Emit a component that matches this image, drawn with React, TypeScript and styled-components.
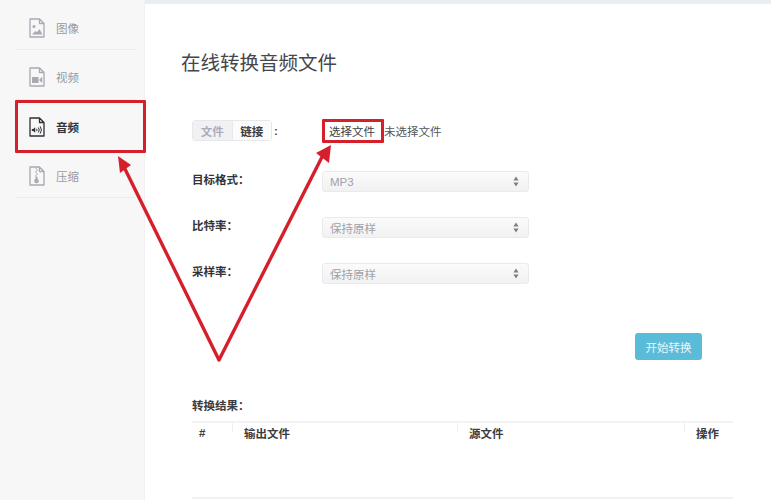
import React from "react";
import styled, { createGlobalStyle } from "styled-components";

const FONT = `"Liberation Sans", "Noto Sans CJK SC", sans-serif`;

const GlobalStyle = createGlobalStyle`
  html, body {
    margin: 0;
    padding: 0;
    background: #fff;
    font-family: ${FONT};
  }
`;

const Page = styled.div`
  width: 771px;
  height: 500px;
  position: relative;
  overflow: hidden;
  display: flex;
`;

const Sidebar = styled.aside`
  width: 145px;
  height: 100%;
  flex-shrink: 0;
  background: #f7f7f8;
  border-right: 1px solid #f1f1f3;
  box-sizing: border-box;
`;

const NavList = styled.nav`
  display: flex;
  flex-direction: column;
  padding: 1px 9px 0 16px;
`;

const NavItem = styled.div<{ $active?: boolean }>`
  height: 49.3px;
  box-sizing: border-box;
  padding: 6px 0 0 13px;
  display: flex;
  align-items: center;
  gap: 11px;
  border-bottom: 1px solid ${(p) => (p.$active ? "transparent" : "#ebebed")};
  color: ${(p) => (p.$active ? "#33343a" : "#989aa3")};
  font-size: 11.5px;
  font-weight: ${(p) => (p.$active ? 700 : 400)};
`;

const Main = styled.main`
  flex: 1;
  display: flex;
  flex-direction: column;
  min-width: 0;
`;

const TopStrip = styled.div`
  height: 4px;
  background: #e9eef3;
`;

const Content = styled.div`
  padding: 46px 38px 0 36px;
`;

const Title = styled.h1`
  margin: 0;
  font-size: 19.5px;
  line-height: 26px;
  font-weight: 400;
  color: #45464b;
`;

const Form = styled.div`
  margin: 44px 0 0 11px;
  display: flex;
  flex-direction: column;
`;

const Row = styled.div<{ $top?: number }>`
  display: flex;
  align-items: center;
  height: 21px;
  margin-top: ${(p) => p.$top ?? 0}px;
`;

const Label = styled.div`
  width: 130px;
  font-size: 11.5px;
  font-weight: 700;
  color: #33343a;
  position: relative;
  top: -3px;
`;

const TabsCell = styled.div`
  width: 130px;
  display: flex;
  align-items: center;
  gap: 2px;
  font-size: 11.5px;
  font-weight: 700;
  color: #44454a;
`;

const Tabs = styled.div`
  display: flex;
  width: 80px;
  height: 21px;
  border: 1px solid #e8e8ea;
  border-radius: 3px;
  box-sizing: border-box;
`;

const Tab = styled.div<{ $active?: boolean }>`
  flex: 1;
  display: flex;
  align-items: center;
  justify-content: center;
  font-size: 11.5px;
  font-weight: 700;
  color: ${(p) => (p.$active ? "#a9acb8" : "#3b3c42")};
  background: ${(p) => (p.$active ? "#f1f1f4" : "#fbfbfb")};
  & + & {
    border-left: 1px solid #e8e8ea;
  }
`;

const FileButton = styled.div`
  width: 60px;
  margin-right: 2px;
  text-align: center;
  font-size: 11.5px;
  color: #3b3c42;
`;

const FileStatus = styled.span`
  font-size: 11.5px;
  color: #55565b;
`;

const SelectBox = styled.div`
  width: 207px;
  height: 21px;
  box-sizing: border-box;
  padding: 0 9px 0 7px;
  display: flex;
  align-items: center;
  justify-content: space-between;
  border: 1px solid #eaeaec;
  border-radius: 3px;
  background: linear-gradient(#fbfbfb, #f1f1f2);
  font-size: 11.5px;
  color: #9fa1a8;
`;

const Actions = styled.div`
  display: flex;
  justify-content: flex-end;
  margin-top: 49px;
  padding-right: 31px;
`;

const StartButton = styled.div`
  width: 67px;
  height: 27px;
  border-radius: 3px;
  background: #5bbcd9;
  color: #e9f7fb;
  font-size: 11.5px;
  display: flex;
  align-items: center;
  justify-content: center;
`;

const ResultTitle = styled.div`
  margin-top: 39px;
  font-size: 11.5px;
  line-height: 14px;
  font-weight: 700;
  color: #3b3c42;
`;

const ResultTable = styled.div`
  margin-top: 8px;
  height: 78px;
  border-top: 2px solid #f3f3f4;
  border-bottom: 2px solid #f1f1f2;
  box-sizing: border-box;
`;

const HeadRow = styled.div`
  display: grid;
  grid-template-columns: 40px 225px 227px 49px;
`;

const HeadCell = styled.div<{ $first?: boolean }>`
  height: 20px;
  padding-left: ${(p) => (p.$first ? 7 : 12)}px;
  display: flex;
  align-items: center;
  font-size: 11.5px;
  font-weight: 700;
  color: #3b3c42;
  background: ${(p) =>
    p.$first ? "none" : "linear-gradient(#eeeeef, #eeeeef) left top / 1px 9px no-repeat"};
`;

const AnnotationBox = styled.div<{ $x: number; $y: number; $w: number; $h: number; $b: number }>`
  position: absolute;
  left: ${(p) => p.$x}px;
  top: ${(p) => p.$y}px;
  width: ${(p) => p.$w}px;
  height: ${(p) => p.$h}px;
  box-sizing: border-box;
  border: ${(p) => p.$b}px solid #d5202c;
  border-radius: 1px;
`;

const ArrowLayer = styled.svg`
  position: absolute;
  inset: 0;
  pointer-events: none;
`;

const FileIcon: React.FC<{ color: string; children: React.ReactNode }> = ({ color, children }) => (
  <svg width="16" height="20" viewBox="0 0 16 20" fill="none">
    <path
      d="M1 1h9.5l4.5 4.5V19H1z M10.5 1v4.5H15"
      stroke={color}
      strokeWidth="1.3"
      strokeLinejoin="round"
    />
    {children}
  </svg>
);

const SortArrows = () => (
  <svg width="6" height="11" viewBox="0 0 6 11" fill="#7e8087">
    <path d="M3 0.5 5.6 4.4H0.4z M3 10.5 0.4 6.6H5.6z" />
  </svg>
);

const navColor = "#a8aab2";
const activeColor = "#2f3036";

export default function App() {
  return (
    <Page>
      <GlobalStyle />
      <Sidebar>
        <NavList>
          <NavItem>
            <FileIcon color={navColor}>
              <circle cx="5" cy="8.5" r="1.5" fill={navColor} />
              <path d="M3 16.5 6.5 13 8 14.2 10.5 11 13.5 16.5z" fill={navColor} />
            </FileIcon>
            图像
          </NavItem>
          <NavItem>
            <FileIcon color={navColor}>
              <rect x="3" y="10" width="6.5" height="6" fill={navColor} />
              <path d="M13.2 9.8V16L10 13z" fill={navColor} />
            </FileIcon>
            视频
          </NavItem>
          <NavItem $active>
            <FileIcon color={activeColor}>
              <path d="M2.8 12h1.4l2-1.8v5.6l-2-1.8H2.8z" fill={activeColor} />
              <path
                d="M7.6 11.8a2 2 0 0 1 0 2.4M9.4 10.5a4.4 4.4 0 0 1 0 5M11.2 9.4a6.4 6.4 0 0 1 0 7.2"
                stroke={activeColor}
                strokeWidth="1"
              />
            </FileIcon>
            音频
          </NavItem>
          <NavItem>
            <FileIcon color={navColor}>
              <path d="M6 2h2M7 4h2M6 6h2M7 8h2M6 10h2" stroke={navColor} strokeWidth="1" />
              <circle cx="7.5" cy="15" r="2.3" fill={navColor} />
              <rect x="6.5" y="11" width="2" height="3" fill={navColor} />
            </FileIcon>
            压缩
          </NavItem>
        </NavList>
      </Sidebar>
      <Main>
        <TopStrip />
        <Content>
          <Title>在线转换音频文件</Title>
          <Form>
            <Row>
              <TabsCell>
                <Tabs>
                  <Tab $active>文件</Tab>
                  <Tab>链接</Tab>
                </Tabs>
                :
              </TabsCell>
              <FileButton>选择文件</FileButton>
              <FileStatus>未选择文件</FileStatus>
            </Row>
            <Row $top={30}>
              <Label>目标格式：</Label>
              <SelectBox>
                MP3
                <SortArrows />
              </SelectBox>
            </Row>
            <Row $top={25}>
              <Label>比特率：</Label>
              <SelectBox>
                保持原样
                <SortArrows />
              </SelectBox>
            </Row>
            <Row $top={25}>
              <Label>采样率：</Label>
              <SelectBox>
                保持原样
                <SortArrows />
              </SelectBox>
            </Row>
            <Actions>
              <StartButton>开始转换</StartButton>
            </Actions>
            <ResultTitle>转换结果：</ResultTitle>
            <ResultTable>
              <HeadRow>
                <HeadCell $first>#</HeadCell>
                <HeadCell>输出文件</HeadCell>
                <HeadCell>源文件</HeadCell>
                <HeadCell>操作</HeadCell>
              </HeadRow>
            </ResultTable>
          </Form>
        </Content>
      </Main>
      <AnnotationBox $x={15} $y={100} $w={131} $h={53} $b={3} />
      <AnnotationBox $x={322} $y={119} $w={62} $h={24} $b={3} />
      <ArrowLayer width="771" height="500" viewBox="0 0 771 500">
        <path
          d="M219 360 124.5 168 M219 360 322 157"
          stroke="#d5202c"
          strokeWidth="3.4"
          strokeLinecap="round"
          fill="none"
        />
        <path d="M118 156 131 165 120 173z" fill="#d5202c" />
        <path d="M331 145 316 153 329 163z" fill="#d5202c" />
      </ArrowLayer>
    </Page>
  );
}
